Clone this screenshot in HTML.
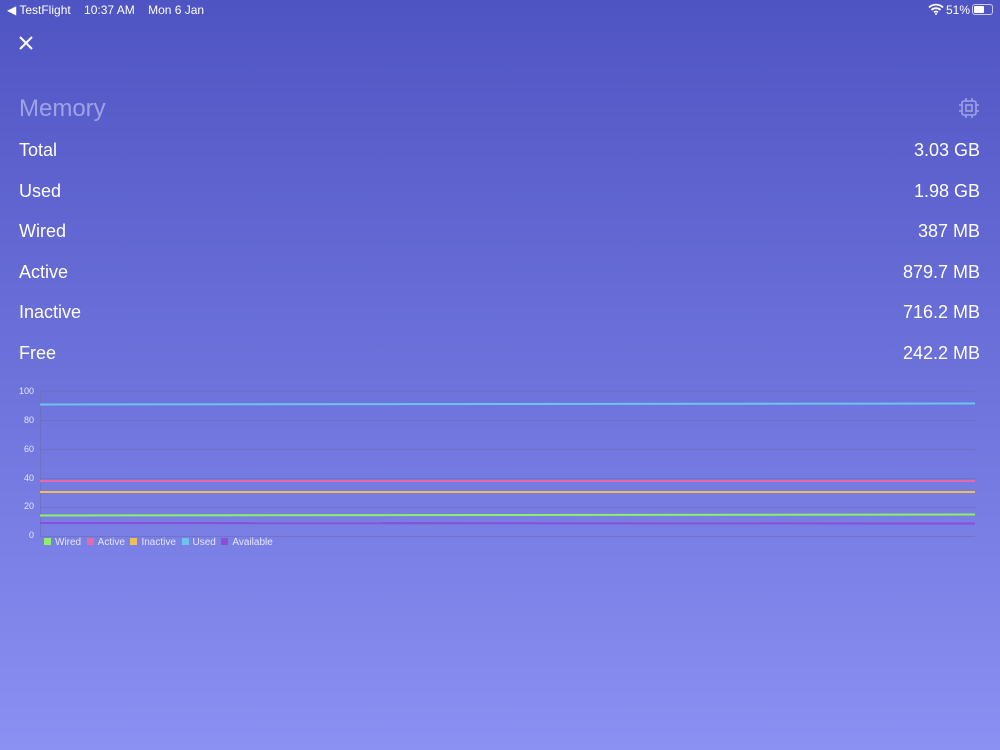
<!DOCTYPE html>
<html><head><meta charset="utf-8"><style>
*{margin:0;padding:0;box-sizing:border-box}
html,body{width:1000px;height:750px;overflow:hidden}
body{background:linear-gradient(180deg,#4f54c3 0%,#8b90f3 100%);font-family:"Liberation Sans",sans-serif;color:#fff;position:relative}
.sb{position:absolute;top:3px;font-size:12px}
.row{position:absolute;left:19px;right:20px;font-size:18px;display:flex;justify-content:space-between}
.lg{position:absolute;top:537px;font-size:10px;color:#e6e6ff}
.sq{display:inline-block;width:7px;height:7px;margin-right:4px;vertical-align:0}
.yl{position:absolute;left:0;width:34px;text-align:right;font-size:9px;color:#e6e6ff}
</style></head><body>
<div class="sb" style="left:7px">◀ TestFlight&nbsp;&nbsp;&nbsp;&nbsp;10:37 AM&nbsp;&nbsp;&nbsp;&nbsp;Mon 6 Jan</div>
<div class="sb" style="left:946px">51%</div>
<svg style="position:absolute;left:928px;top:3px" width="16" height="12" viewBox="0 0 16 12"><path d="M1 4.5a10 10 0 0 1 14 0M3.5 7a6.5 6.5 0 0 1 9 0M6 9.3a3 3 0 0 1 4 0" stroke="#fff" stroke-width="1.8" fill="none"/><circle cx="8" cy="11" r="1" fill="#fff"/></svg>
<div style="position:absolute;left:972px;top:4px;width:21px;height:11px;border:1px solid rgba(255,255,255,.7);border-radius:3px"><div style="position:absolute;left:1px;top:1px;width:10px;height:7px;background:#fff;border-radius:1px"></div></div>
<svg style="position:absolute;left:18px;top:35px" width="16" height="16" viewBox="0 0 16 16"><path d="M2 2L14 14M14 2L2 14" stroke="#fff" stroke-width="2"/></svg>
<div style="position:absolute;left:19px;top:95px;font-size:24px;color:#9ea2e6">Memory</div>
<svg style="position:absolute;left:958px;top:97px" width="22" height="22" viewBox="0 0 22 22" fill="none" stroke="#9ea2e6" stroke-width="1.6"><rect x="4" y="4" width="14" height="14" rx="2"/><rect x="8" y="8" width="6" height="6"/><path d="M8 1v3M14 1v3M8 18v3M14 18v3M1 8h3M1 14h3M18 8h3M18 14h3"/></svg>
<div class="row" style="top:140px"><span>Total</span><span>3.03 GB</span></div>
<div class="row" style="top:181px"><span>Used</span><span>1.98 GB</span></div>
<div class="row" style="top:221px"><span>Wired</span><span>387 MB</span></div>
<div class="row" style="top:262px"><span>Active</span><span>879.7 MB</span></div>
<div class="row" style="top:302px"><span>Inactive</span><span>716.2 MB</span></div>
<div class="row" style="top:343px"><span>Free</span><span>242.2 MB</span></div>
<div class="yl" style="top:386px">100</div>
<div class="yl" style="top:415px">80</div>
<div class="yl" style="top:444px">60</div>
<div class="yl" style="top:473px">40</div>
<div class="yl" style="top:501px">20</div>
<div class="yl" style="top:530px">0</div>
<svg style="position:absolute;left:0;top:0" width="1000" height="750">
<g stroke="#6f6fb8" stroke-width="1" opacity="0.7">
<line x1="40" y1="391.5" x2="975" y2="391.5"/><line x1="40" y1="420.5" x2="975" y2="420.5"/><line x1="40" y1="449.5" x2="975" y2="449.5"/><line x1="40" y1="478.5" x2="975" y2="478.5"/><line x1="40" y1="507.5" x2="975" y2="507.5"/><line x1="40" y1="536.5" x2="975" y2="536.5"/><line x1="40.5" y1="391" x2="40.5" y2="536"/></g>
<g stroke-width="2">
<line x1="40" y1="404.5" x2="975" y2="403.5" stroke="#6ec3ee"/>
<line x1="40" y1="481" x2="975" y2="481" stroke="#e56aa7"/>
<line x1="40" y1="492" x2="975" y2="492" stroke="#eebf55"/>
<line x1="40" y1="515.5" x2="975" y2="514.5" stroke="#8ef06a"/>
<line x1="40" y1="523" x2="975" y2="523.5" stroke="#8a4fd6"/>
</g></svg>
<div class="lg" style="left:44px"><span class="sq" style="background:#8ef06a"></span>Wired&nbsp;&nbsp;<span class="sq" style="background:#e56aa7"></span>Active&nbsp;&nbsp;<span class="sq" style="background:#eebf55"></span>Inactive&nbsp;&nbsp;<span class="sq" style="background:#6ec3ee"></span>Used&nbsp;&nbsp;<span class="sq" style="background:#8a4fd6"></span>Available</div>
</body></html>
